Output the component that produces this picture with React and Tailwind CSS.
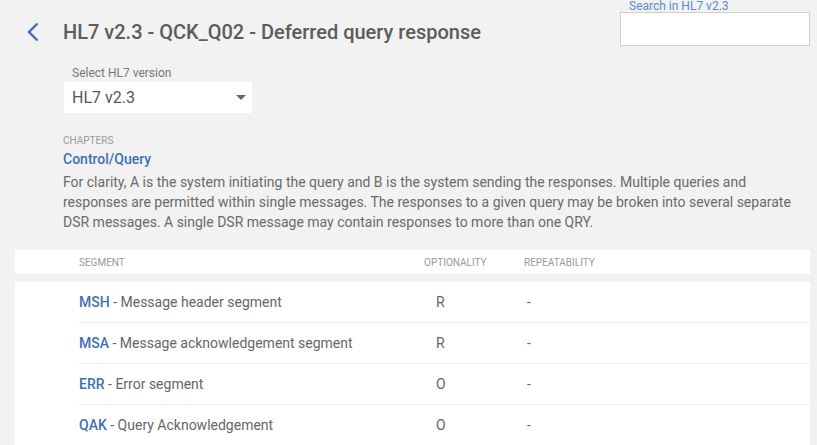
import { useState } from "react";

const segments = [
  { code: "MSH", name: "Message header segment", opt: "R", rep: "-" },
  { code: "MSA", name: "Message acknowledgement segment", opt: "R", rep: "-" },
  { code: "ERR", name: "Error segment", opt: "O", rep: "-" },
  { code: "QAK", name: "Query Acknowledgement", opt: "O", rep: "-" },
];

export default function App() {
  const [query, setQuery] = useState("");

  return (
    <div className="min-h-screen bg-[#f2f2f2] font-['Roboto',sans-serif] text-[#666]">
      {/* Header */}
      <div className="flex justify-between pl-[26px] pr-[7px]">
        <div className="flex items-center pt-[17px]">
          <svg width="14" height="20" viewBox="0 0 14 20" className="text-[#3f6fb5]">
            <path d="M11.5 1.5 L3 10 L11.5 18.5" fill="none" stroke="currentColor" strokeWidth="2.4" />
          </svg>
          <h1 className="ml-[23px] text-[20px] leading-[24px] font-medium text-[#5c5c5c]">
            HL7 v2.3 - QCK_Q02 - Deferred query response
          </h1>
        </div>
        <div className="w-[190px]">
          <label className="block pl-[9px] text-[12px] leading-[12px] text-[#5b8ac7]">
            Search in HL7 v2.3
          </label>
          <input
            className="block h-[34px] w-full border border-[#cfcfcf] bg-white px-2 text-sm outline-none"
            value={query}
            onChange={(e) => setQuery(e.target.value)}
          />
        </div>
      </div>

      {/* Version select */}
      <div className="ml-[64px] mt-[20px] w-[188px]">
        <div className="pl-[8px] text-[12px] leading-[14px] text-[#777]">Select HL7 version</div>
        <div className="mt-[2px] flex h-[31px] items-center justify-between bg-white pl-[8px] pr-[6px]">
          <span className="text-[16px] text-[#555]">HL7 v2.3</span>
          <svg width="10" height="5" viewBox="0 0 10 5">
            <path d="M0 0 L10 0 L5 5 Z" fill="#666" />
          </svg>
        </div>
      </div>

      {/* Chapter */}
      <div className="ml-[63px] mr-[20px] mt-[22px]">
        <div className="text-[10px] leading-[12px] uppercase text-[#999]">Chapters</div>
        <div className="mt-[3px] text-[14px] leading-[18px] font-medium text-[#3f6fb5]">Control/Query</div>
        <p className="mt-[4px] text-[14px] leading-[20px] text-[#6a6a6a]">
          For clarity, A is the system initiating the query and B is the system sending the responses. Multiple queries and responses are permitted within single messages. The responses to a given query may be broken into several separate DSR messages. A single DSR message may contain responses to more than one QRY.
        </p>
      </div>

      {/* Table */}
      <div className="ml-[15px] mr-[7px] mt-[18px]">
        <div className="flex h-[24px] items-center bg-white pl-[64px] text-[10px] uppercase text-[#999]">
          <div className="w-[345px]">Segment</div>
          <div className="w-[100px]">Optionality</div>
          <div>Repeatability</div>
        </div>
        <div className="mt-[8px] bg-white pl-[64px]">
          {segments.map((s, i) => (
            <div
              key={s.code}
              className={`flex h-[41px] items-center text-[14px] ${i < segments.length - 1 ? "border-b border-[#eeeeee]" : ""}`}
            >
              <div className="w-[345px]">
                <span className="font-medium text-[#3f6fb5]">{s.code}</span>
                <span className="text-[#666]"> - {s.name}</span>
              </div>
              <div className="w-[100px] pl-[12px] text-[#666]">{s.opt}</div>
              <div className="pl-[3px] text-[#666]">{s.rep}</div>
            </div>
          ))}
        </div>
      </div>
    </div>
  );
}
